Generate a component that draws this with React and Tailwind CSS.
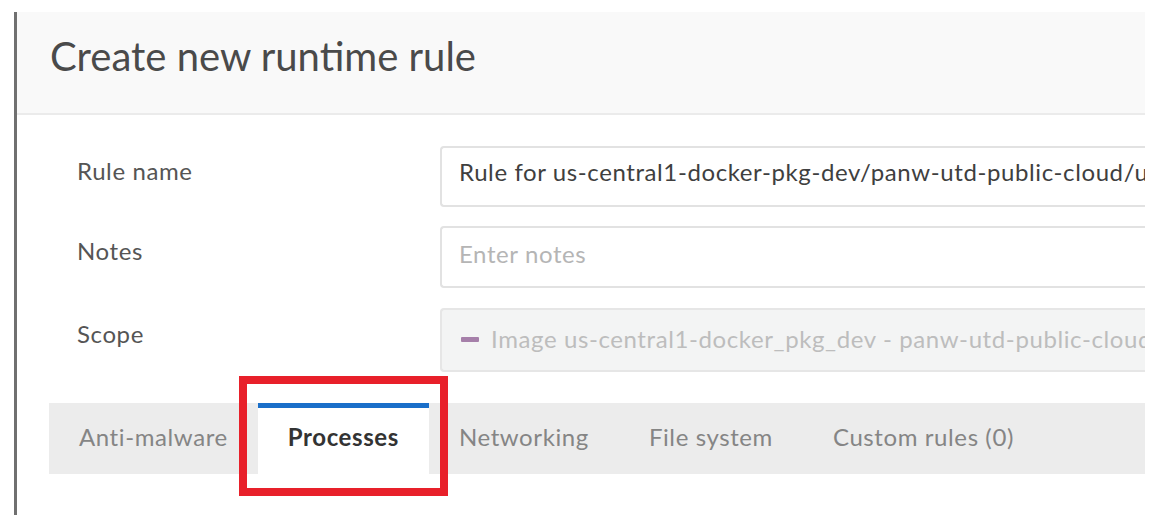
import React from "react";

const tabs = ["Anti-malware", "Processes", "Networking", "File system", "Custom rules (0)"];

const FieldRow = ({ label, children }) => (
    <div className="flex items-center">
        <div className="w-[423px] pl-[60px] text-[24px] tracking-[0.6px] text-[#555] -mt-[12px]">{label}</div>
        {children}
    </div>
);

const App = () => {
    return (
        <div
            className="w-[1160px] h-[526px] bg-white pt-[12px] pl-[14px] overflow-hidden"
            style={{ fontFamily: "Lato, 'Open Sans', sans-serif" }}
        >
            <div className="w-[1131px] h-[503px] border-l-[3px] border-[#707070]">
                <div className="h-[103px] bg-[#f9f9f9] border-b-2 border-[#ebebeb] flex items-center pl-[33px]">
                    <h1 className="text-[40px] text-[#4a4a4a] font-normal leading-none -mt-[13px]">
                        Create new runtime rule
                    </h1>
                </div>

                <div className="flex flex-col gap-[19px] pt-[31px]">
                    <FieldRow label="Rule name">
                        <div className="flex-1 h-[61px] border-2 border-r-0 border-[#e2e2e2] rounded-l-[4px] flex items-center pl-[17px] pb-[10px] overflow-hidden whitespace-nowrap text-[24px] tracking-[0.6px] text-[#3f3f3f]">
                            Rule for us-central1-docker-pkg-dev/panw-utd-public-cloud/utd
                        </div>
                    </FieldRow>
                    <FieldRow label="Notes">
                        <div className="flex-1 h-[62px] border-2 border-r-0 border-[#e2e2e2] rounded-l-[4px] flex items-center pl-[17px] pb-[6px] text-[24px] tracking-[0.6px] text-[#b5b5b5]">
                            Enter notes
                        </div>
                    </FieldRow>
                    <FieldRow label="Scope">
                        <div className="flex-1 h-[64px] mt-[1px] border-2 border-r-0 border-[#e6e6e6] bg-[#f3f4f4] rounded-l-[4px] flex items-center pl-[19px] pb-[2px] overflow-hidden whitespace-nowrap text-[24px] tracking-[0.6px] text-[#bdbdbd]">
                            <span className="w-[18px] h-[5px] bg-[#a57fa9] rounded-[1px] mr-[12px] shrink-0" />
                            Image us-central1-docker_pkg_dev - panw-utd-public-cloud
                        </div>
                    </FieldRow>
                </div>

                <div className="ml-[32px] mt-[31px] h-[71px] bg-[#ececec] flex items-stretch text-[24px] tracking-[0.6px]">
                    {tabs.map((t) =>
                        t === "Processes" ? (
                            <div
                                key={t}
                                className="relative px-[30px] bg-white border-t-[5px] border-[#1a6fc9] flex items-center font-bold text-[#333]"
                            >
                                <span className="-mt-[8px]">{t}</span>
                                <div className="absolute -left-[19px] -right-[19px] -top-[32px] -bottom-[22px] border-[8px] border-[#e8202a]" />
                            </div>
                        ) : (
                            <div key={t} className="px-[30px] flex items-center text-[#858585]">
                                <span className="-mt-[4px]">{t}</span>
                            </div>
                        )
                    )}
                </div>
            </div>
        </div>
    );
};

export default App;
